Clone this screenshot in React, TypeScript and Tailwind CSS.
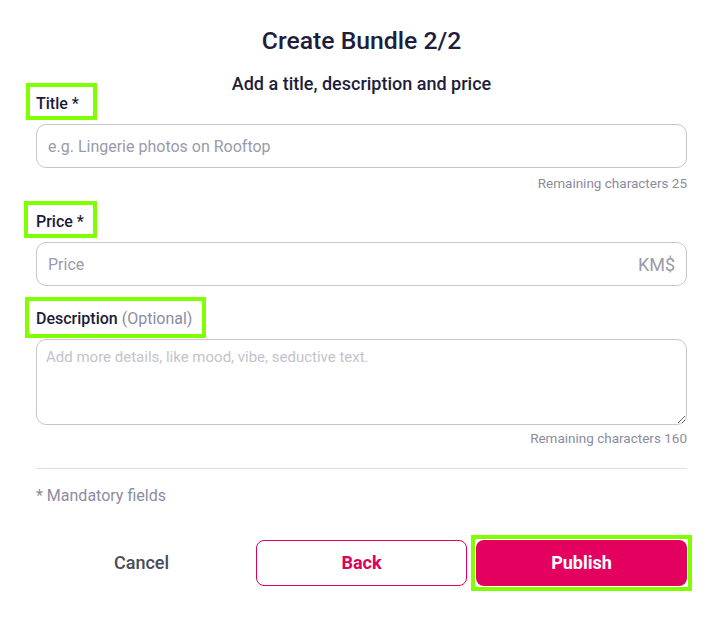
import React from "react";

function FieldLabel({
  children,
  frame,
}: {
  children: React.ReactNode;
  frame: string;
}) {
  return (
    <div className="h-[24px] leading-[24px]">
      <span className="relative inline-block text-[16px] leading-[24px] font-medium text-[#1c1b38]">
        {children}
        <span className={`pointer-events-none absolute border-[4px] border-[#80ff00] ${frame}`} />
      </span>
    </div>
  );
}

export default function App() {
  return (
    <div className="w-[724px] h-[630px] bg-white font-['Roboto',sans-serif] pl-[36px] pr-[37px]">
      <h1 className="pt-[25px] text-center text-[24.75px] leading-[32px] font-medium text-[#1e1d3b]">
        Create Bundle 2/2
      </h1>
      <p className="mt-[17px] text-center text-[18px] leading-[20px] font-medium text-[#1e1d3b]">
        Add a title, description and price
      </p>

      <div className="-mt-[2px]">
        <FieldLabel frame="left-[-10px] top-[-9px] w-[71px] h-[37px]">Title *</FieldLabel>
      </div>
      <input
        type="text"
        placeholder="e.g. Lingerie photos on Rooftop"
        className="mt-[8px] block w-full h-[44px] rounded-[10px] border border-[#c6c6ca] px-[11px] text-[16px] text-[#1c1b38] outline-none placeholder:text-[#9a9aab]"
      />
      <div className="mt-[5px] text-right text-[13.5px] leading-[20px] text-[#8c8c9c]">
        Remaining characters 25
      </div>

      <div className="mt-[17px]">
        <FieldLabel frame="left-[-12px] top-[-9px] w-[73px] h-[37px]">Price *</FieldLabel>
      </div>
      <div className="mt-[8px] flex h-[44px] items-center rounded-[10px] border border-[#c6c6ca] pl-[11px] pr-[11px]">
        <input
          type="text"
          placeholder="Price"
          className="min-w-0 flex-1 bg-transparent pt-[1px] text-[16px] text-[#1c1b38] outline-none placeholder:text-[#9a9aab]"
        />
        <span className="text-[18px] text-[#9a9aab]">KM$</span>
      </div>

      <div className="mt-[21px]">
        <FieldLabel frame="left-[-11px] top-[-10px] w-[181px] h-[41px]">
          Description <span className="font-normal text-[#8c8ca2]">(Optional)</span>
        </FieldLabel>
      </div>
      <textarea
        placeholder="Add more details, like mood, vibe, seductive text."
        className="mt-[8px] block w-full h-[86px] rounded-[10px] border border-[#c6c6ca] pl-[9px] pr-[10px] pt-[6px] text-[15px] leading-[22px] text-[#1c1b38] outline-none placeholder:text-[#c3c3cb]"
      />
      <div className="mt-[3px] text-right text-[13.5px] leading-[20px] text-[#8c8c9c]">
        Remaining characters 160
      </div>

      <div className="mt-[20px] h-px bg-[#dedaf8]" />

      <div className="mt-[15px] text-[16px] leading-[24px] text-[#8c8ca2]">* Mandatory fields</div>

      <div className="mt-[32px] grid grid-cols-3 gap-[9px]">
        <button className="h-[46px] pb-[1px] text-[18px] font-medium text-[#4a4a58]">Cancel</button>
        <button className="h-[46px] rounded-[8px] border border-[#e0005a] bg-white pb-[1px] text-[18px] font-bold text-[#e0005a]">
          Back
        </button>
        <div className="-m-[5px] border-[4px] border-[#80ff00] bg-white p-[1px]">
          <button className="block h-[46px] w-full rounded-[8px] bg-[#e3005f] pb-[1px] text-[18px] font-bold text-white">
            Publish
          </button>
        </div>
      </div>
    </div>
  );
}
